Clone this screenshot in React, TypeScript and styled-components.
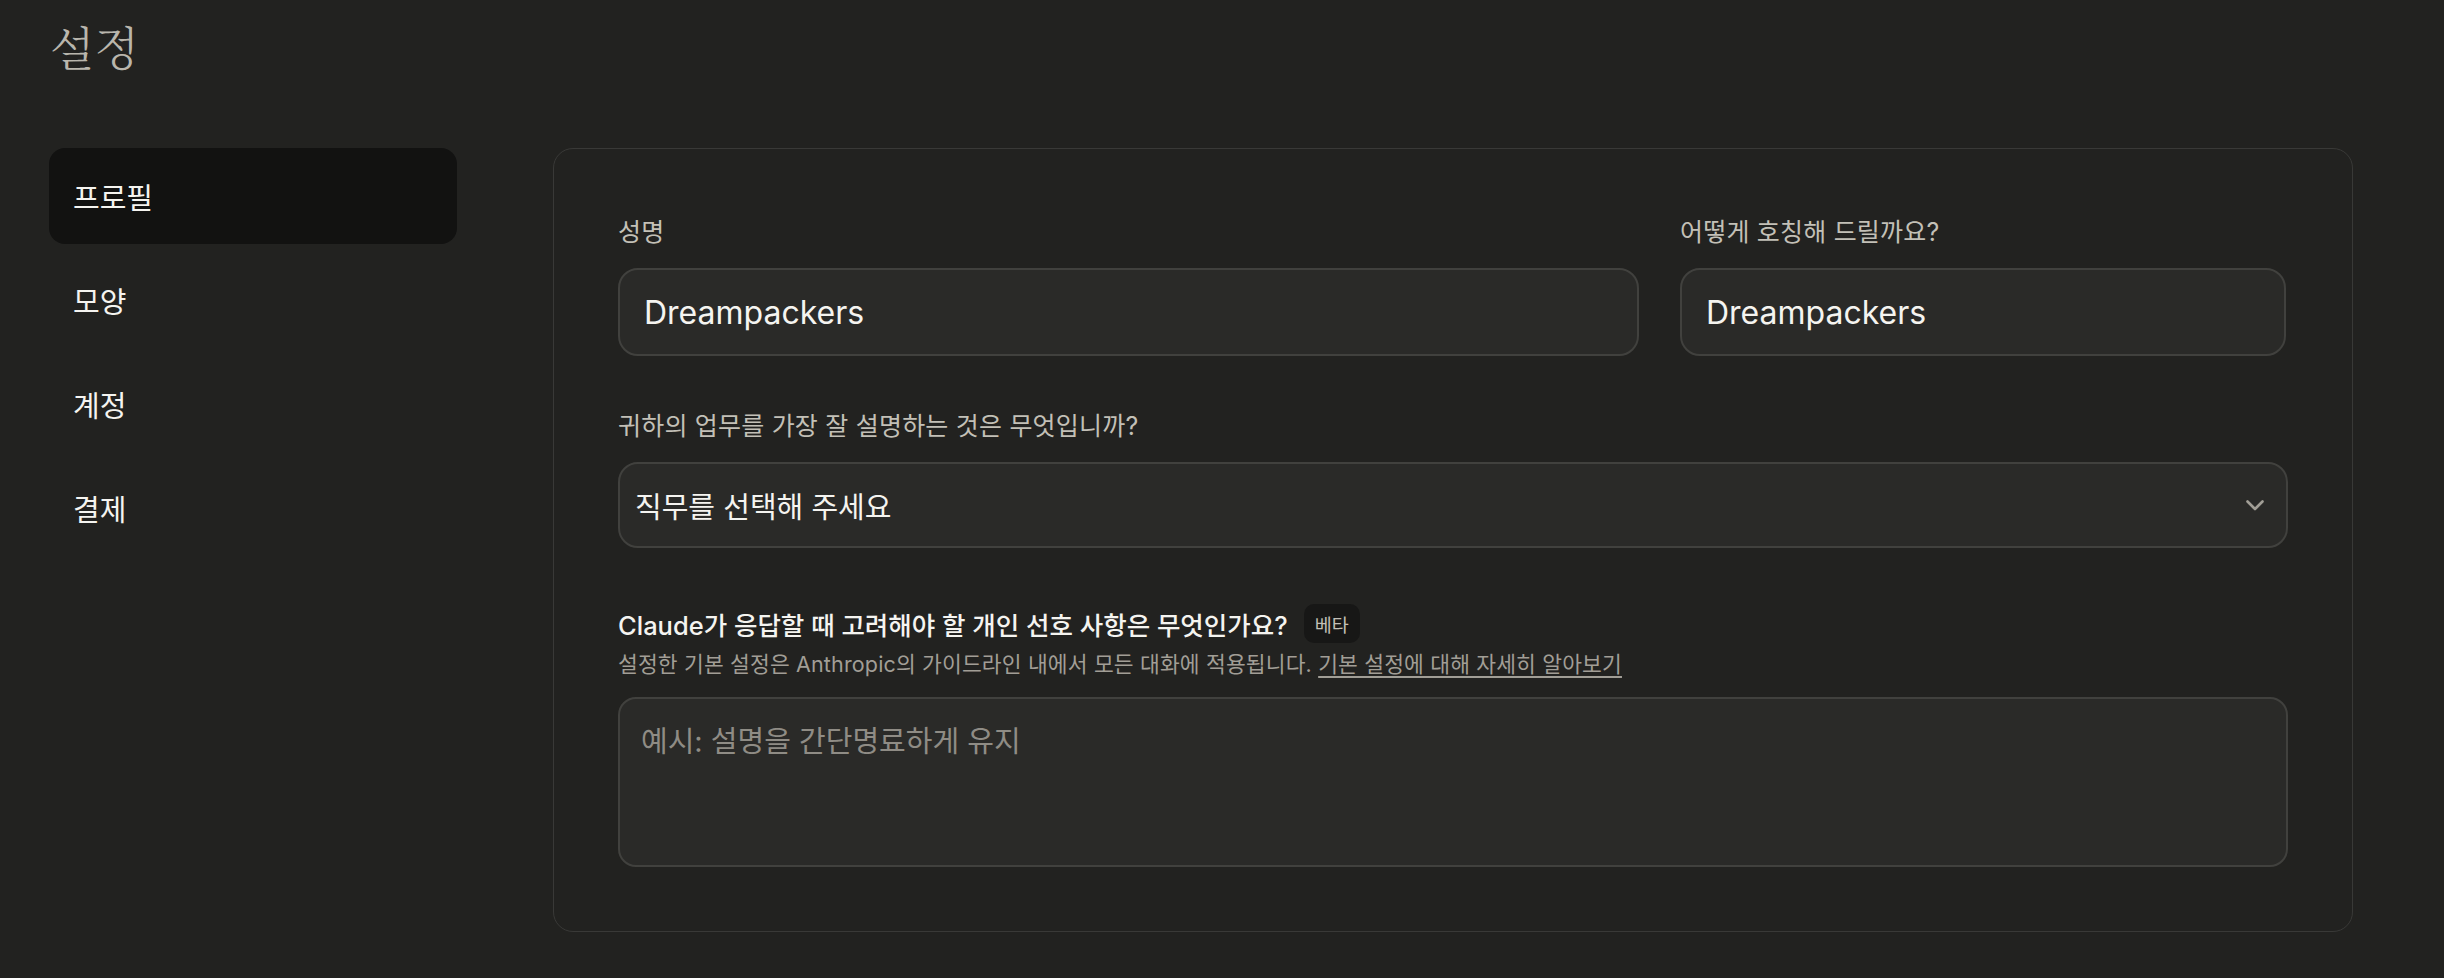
import * as React from "react";
import styled, { createGlobalStyle } from "styled-components";

const GlobalStyle = createGlobalStyle`
  html, body {
    margin: 0;
    padding: 0;
    background: #222220;
  }
  body {
    font-family: "Inter", "Noto Sans CJK KR", sans-serif;
    color: #f3f2ee;
  }
  * {
    box-sizing: border-box;
  }
`;

const Page = styled.div`
  min-height: 978px;
  padding: 18px 0 0 49px;
`;

const PageTitle = styled.h1`
  margin: 0 0 76px 1px;
  font-family: "Noto Serif CJK KR", "Noto Sans CJK KR", serif;
  font-size: 46px;
  line-height: 54px;
  font-weight: 300;
  color: #b9b6ad;
`;

const Layout = styled.div`
  display: flex;
  align-items: flex-start;
  gap: 96px;
`;

const Sidebar = styled.nav`
  width: 408px;
  display: flex;
  flex-direction: column;
  gap: 8px;
`;

const NavItem = styled.div<{ $active?: boolean }>`
  height: 96px;
  display: flex;
  align-items: center;
  padding-left: 24px;
  border-radius: 16px;
  background: ${(p) => (p.$active ? "#121211" : "transparent")};
  font-family: "Noto Sans CJK KR", sans-serif;
  font-size: 29px;
  color: #f5f4f0;
`;

const Card = styled.section`
  width: 1800px;
  border: 1px solid #393937;
  border-radius: 20px;
  padding: 64px 64px 64px;
  display: flex;
  flex-direction: column;
`;

const NameRow = styled.div`
  display: grid;
  grid-template-columns: 1021px 606px;
  gap: 41px;
  margin-bottom: 51px;
`;

const Field = styled.div`
  display: flex;
  flex-direction: column;
`;

const Label = styled.label`
  padding-top: 2px;
  font-size: 25px;
  line-height: 34px;
  letter-spacing: 0.2px;
  color: #c3c0b7;
  margin-bottom: 19px;
`;

const TextInput = styled.input`
  height: 88px;
  width: 100%;
  background: #2a2a28;
  border: 2px solid #41413e;
  border-radius: 20px;
  padding: 0 24px;
  font-family: "Inter", "Noto Sans CJK KR", sans-serif;
  font-size: 32px;
  color: #f5f4f0;
  outline: none;
`;

const SelectBox = styled.div`
  height: 86px;
  background: #2a2a28;
  border: 2px solid #41413e;
  border-radius: 20px;
  padding: 0 22px 0 15px;
  display: flex;
  align-items: center;
  justify-content: space-between;
  font-size: 29px;
  color: #f5f4f0;
  margin-bottom: 56px;
`;

const PrefHeader = styled.div`
  display: flex;
  align-items: center;
  gap: 16px;
  height: 39px;
`;

const PrefTitle = styled.span`
  font-size: 25.5px;
  font-weight: 500;
  color: #f5f4f0;
`;

const Badge = styled.span`
  height: 39px;
  padding: 0 11px;
  display: inline-flex;
  align-items: center;
  border-radius: 10px;
  background: #171716;
  font-size: 18.5px;
  color: #c3c0b7;
`;

const Hint = styled.p`
  margin: 6px 0 18px;
  font-size: 21.5px;
  line-height: 30px;
  letter-spacing: 0.15px;
  color: #a19e96;
`;

const HintLink = styled.a`
  color: #a19e96;
  text-decoration: underline;
  text-underline-offset: 4px;
`;

const TextArea = styled.textarea`
  height: 170px;
  width: 100%;
  resize: none;
  background: #2a2a28;
  border: 2px solid #41413e;
  border-radius: 18px;
  padding: 23px 21px 19px;
  font-family: "Inter", "Noto Sans CJK KR", sans-serif;
  font-size: 29px;
  line-height: 40px;
  color: #f5f4f0;
  outline: none;
  &::placeholder {
    color: #8f8c85;
  }
`;

const Chevron = () => (
  <svg width="18" height="11" viewBox="0 0 18 11" fill="none">
    <path
      d="M1.5 1.5 L9 9 L16.5 1.5"
      stroke="#a19e96"
      strokeWidth="2.6"
      strokeLinecap="round"
      strokeLinejoin="round"
    />
  </svg>
);

const App = () => {
  return (
    <>
      <GlobalStyle />
      <Page>
        <PageTitle>설정</PageTitle>
        <Layout>
          <Sidebar>
            <NavItem $active>프로필</NavItem>
            <NavItem>모양</NavItem>
            <NavItem>계정</NavItem>
            <NavItem>결제</NavItem>
          </Sidebar>
          <Card>
            <NameRow>
              <Field>
                <Label>성명</Label>
                <TextInput defaultValue="Dreampackers" />
              </Field>
              <Field>
                <Label>어떻게 호칭해 드릴까요?</Label>
                <TextInput defaultValue="Dreampackers" />
              </Field>
            </NameRow>
            <Field>
              <Label>귀하의 업무를 가장 잘 설명하는 것은 무엇입니까?</Label>
              <SelectBox>
                <span>직무를 선택해 주세요</span>
                <Chevron />
              </SelectBox>
            </Field>
            <PrefHeader>
              <PrefTitle>Claude가 응답할 때 고려해야 할 개인 선호 사항은 무엇인가요?</PrefTitle>
              <Badge>베타</Badge>
            </PrefHeader>
            <Hint>
              설정한 기본 설정은 Anthropic의 가이드라인 내에서 모든 대화에 적용됩니다.{" "}
              <HintLink>기본 설정에 대해 자세히 알아보기</HintLink>
            </Hint>
            <TextArea placeholder="예시: 설명을 간단명료하게 유지" />
          </Card>
        </Layout>
      </Page>
    </>
  );
};

export default App;
